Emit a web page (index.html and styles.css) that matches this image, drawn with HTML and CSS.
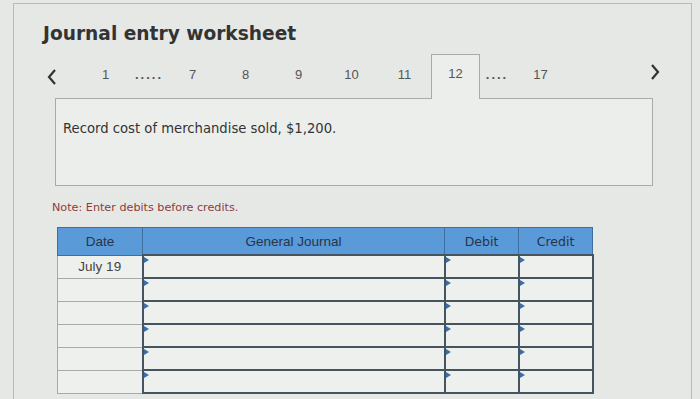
FILE: index.html
```html
<!DOCTYPE html>
<html lang="en">
  <head>
    <meta charset="UTF-8" />
    <title>Journal entry worksheet</title>
    <link rel="stylesheet" href="styles.css">
  </head>
  <body>
    <div class="panel">
      <h1 class="title">Journal entry worksheet</h1>

      <div class="steps">
        <span class="arrow prev">
          <svg width="12" height="18" viewBox="0 0 12 18">
            <path d="M9 2 L3 9 L9 16" fill="none" stroke="#333" stroke-width="2.2" />
          </svg>
        </span>
        <span class="step">1</span>
        <span class="dots">.....</span>
        <span class="step">7</span>
        <span class="step">8</span>
        <span class="step">9</span>
        <span class="step">10</span>
        <span class="step">11</span>
        <span class="step active">12</span>
        <span class="dots">....</span>
        <span class="step">17</span>
        <span class="arrow next">
          <svg width="12" height="18" viewBox="0 0 12 18">
            <path d="M3 2 L9 9 L3 16" fill="none" stroke="#333" stroke-width="2.2" />
          </svg>
        </span>
      </div>

      <div class="question">Record cost of merchandise sold, $1,200.</div>

      <p class="note">Note: Enter debits before credits.</p>

      <table class="journal">
        <tr>
          <th class="c-date">Date</th>
          <th class="c-gj">General Journal</th>
          <th class="c-amt">Debit</th>
          <th class="c-amt">Credit</th>
        </tr>
        <tr>
          <td class="date">July 19</td>
          <td class="entry"></td>
          <td class="entry"></td>
          <td class="entry"></td>
        </tr>
        <tr>
          <td class="date"></td>
          <td class="entry"></td>
          <td class="entry"></td>
          <td class="entry"></td>
        </tr>
        <tr>
          <td class="date"></td>
          <td class="entry"></td>
          <td class="entry"></td>
          <td class="entry"></td>
        </tr>
        <tr>
          <td class="date"></td>
          <td class="entry"></td>
          <td class="entry"></td>
          <td class="entry"></td>
        </tr>
        <tr>
          <td class="date"></td>
          <td class="entry"></td>
          <td class="entry"></td>
          <td class="entry"></td>
        </tr>
        <tr>
          <td class="date"></td>
          <td class="entry"></td>
          <td class="entry"></td>
          <td class="entry"></td>
        </tr>
      </table>
    </div>
  </body>
</html>
```

FILE: styles.css
```css
body {
  margin: 0;
  background: #e6e8e5;
  font-family: "DejaVu Sans", Verdana, sans-serif;
  overflow: hidden;
}

.panel {
  margin: 3px 8px 0 13px;
  height: 396px;
  border: 1px solid #b9bbb8;
  border-bottom: none;
  padding: 18px 0 0 29px;
  box-sizing: border-box;
}

.title {
  margin: 0;
  font-size: 18.6px;
  line-height: 24px;
  font-weight: bold;
  color: #333;
}

/* step navigation */
.steps {
  display: flex;
  align-items: center;
  height: 44px;
  margin-top: 8px;
  margin-left: -6px;
  margin-right: 21px;
  font-family: "Liberation Sans", Arial, sans-serif;
  font-size: 13px;
  color: #555;
}
.steps .arrow {
  width: 30px;
  display: flex;
  justify-content: center;
}
.steps .prev {
  margin-right: 12px;
  padding-top: 2px;
}
.steps .next {
  margin-left: auto;
  padding-bottom: 8px;
}
.step {
  width: 53px;
  text-align: center;
  padding-bottom: 4px;
}
.dots {
  width: 34px;
  text-align: center;
  letter-spacing: 2px;
  font-weight: bold;
  padding-bottom: 4px;
}
.step.active {
  width: 49px;
  height: 45px;
  line-height: 38px;
  padding-bottom: 0;
  border: 1px solid #a9aba8;
  border-bottom: none;
  background: #eceeeb;
  box-sizing: border-box;
  margin-bottom: -1px;
  align-self: flex-start;
}

.question {
  margin-left: 12px;
  width: 598px;
  height: 88px;
  border: 1px solid #a9aba8;
  background: #eceeeb;
  box-sizing: border-box;
  padding: 21px 0 0 7px;
  font-size: 13.2px;
  line-height: 18px;
  color: #333;
}

.note {
  margin: 15px 0 0 9px;
  font-size: 11.2px;
  line-height: 14px;
  color: #8e3b3b;
}

/* journal table */
.journal {
  margin: 12px 0 0 14px;
  border-collapse: collapse;
  font-family: "Liberation Sans", Arial, sans-serif;
}
.journal th {
  height: 26px;
  padding: 0;
  background: #5a9ad8;
  border: 1px solid #3d6f9f;
  font-size: 13.5px;
  font-weight: normal;
  color: #26354a;
}
.c-date {
  width: 84px;
}
.c-gj {
  width: 301px;
}
.c-amt {
  width: 73px;
  font-family: "DejaVu Sans", Verdana, sans-serif;
  font-size: 12.5px !important;
}
.journal td {
  height: 21px;
  padding: 0;
  background: #eef0ed;
}
.journal .date {
  border: 1px solid #a7aaa7;
  text-align: center;
  font-size: 13.5px;
  color: #444;
}
.journal .entry {
  border: 2px solid #45545f;
  position: relative;
}
.journal .entry::before {
  content: "";
  position: absolute;
  left: 0;
  top: 1px;
  border-left: 5px solid #3b6ea8;
  border-top: 3px solid transparent;
  border-bottom: 3px solid transparent;
}
```
